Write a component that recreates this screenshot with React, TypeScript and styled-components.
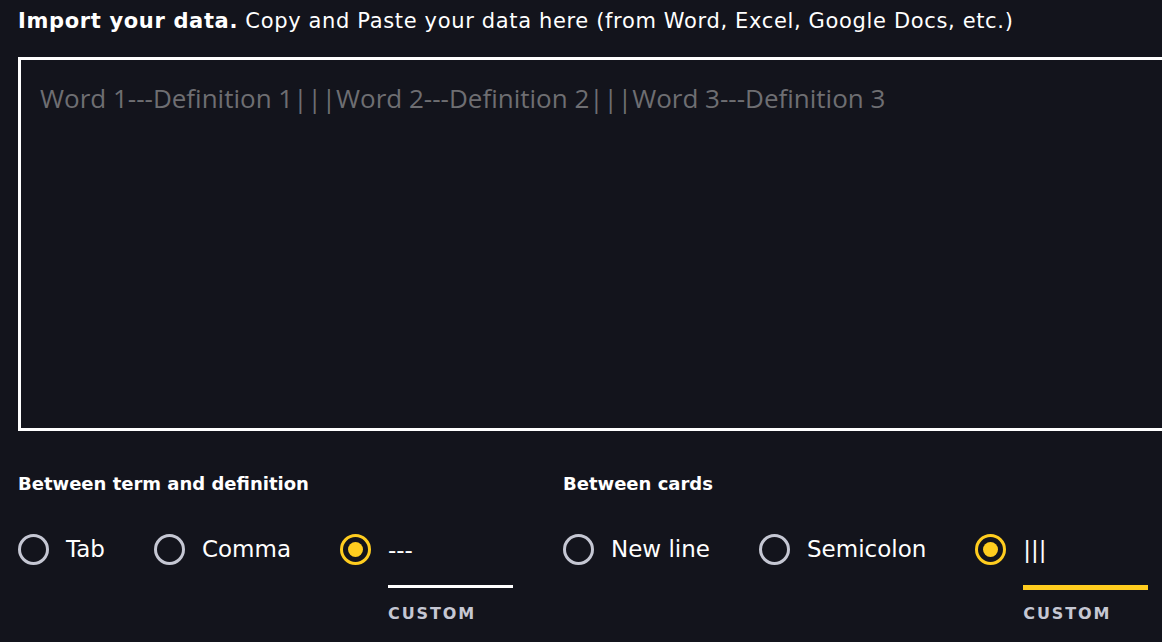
import React from "react";
import styled, { createGlobalStyle } from "styled-components";

const Global = createGlobalStyle`
  html, body { margin: 0; padding: 0; background: #13141c; overflow: hidden; }
  body { font-family: "DejaVu Sans", "Open Sans", sans-serif; color: #ffffff; }
  * { box-sizing: border-box; }
`;

const Page = styled.div`
  width: 1162px;
  height: 642px;
  padding: 8px 0 0 18px;
  overflow: hidden;
`;

const Heading = styled.p`
  margin: 0;
  font-size: 21px;
  letter-spacing: 0.65px;
  line-height: 26px;
  white-space: nowrap;
  strong { font-weight: 700; }
`;

const Area = styled.textarea`
  display: block;
  margin-top: 23px;
  width: 1180px;
  height: 374px;
  border: 3px solid #ffffff;
  border-radius: 0;
  background: transparent;
  color: #ffffff;
  font-family: "Open Sans", sans-serif;
  font-size: 26px;
  padding: 20px 19px;
  resize: none;
  outline: none;
  &::placeholder { color: #6e6e72; opacity: 1; }
`;

const Options = styled.div`
  display: flex;
  margin-top: 41px;
`;

const Column = styled.div`
  width: 545px;
  flex: none;
`;

const GroupLabel = styled.div`
  font-size: 18px;
  font-weight: 700;
  line-height: 24px;
`;

const RadioList = styled.div`
  display: flex;
  align-items: flex-start;
  gap: 49px;
  margin-top: 38px;
`;

const Item = styled.label`
  display: flex;
  align-items: flex-start;
  gap: 17px;
  cursor: pointer;
`;

const Circle = styled.span<{ $on?: boolean }>`
  flex: none;
  width: 31px;
  height: 31px;
  border-radius: 50%;
  border: 3px solid ${(p) => (p.$on ? "#ffcd1f" : "#c5c7d3")};
  display: flex;
  align-items: center;
  justify-content: center;
  &::after {
    content: "";
    display: ${(p) => (p.$on ? "block" : "none")};
    width: 15px;
    height: 15px;
    border-radius: 50%;
    background: #ffcd1f;
  }
`;

const ItemText = styled.span`
  font-size: 23px;
  line-height: 31px;
  white-space: nowrap;
`;

const Custom = styled.div`
  display: flex;
  flex-direction: column;
  width: 125px;
`;

const Field = styled.div`
  height: 58px;
`;

const CustomInput = styled.input<{ $active?: boolean }>`
  display: block;
  width: 125px;
  height: ${(p) => (p.$active ? "56px" : "54px")};
  padding: 0 0 20px 0;
  background: transparent;
  border: none;
  border-bottom: ${(p) => (p.$active ? "5px solid #ffcd1f" : "3px solid #ffffff")};
  color: #ffffff;
  font-family: inherit;
  font-size: 23px;
  line-height: 31px;
  outline: none;
`;

const CustomLabel = styled.span`
  margin-top: 11px;
  font-size: 16px;
  line-height: 22px;
  font-weight: 700;
  letter-spacing: 1.9px;
  color: #c5c7d3;
  text-transform: uppercase;
`;

function Radio({ label, on }: { label: string; on?: boolean }) {
  return (
    <Item>
      <Circle $on={on} />
      <ItemText>{label}</ItemText>
    </Item>
  );
}

function CustomRadio({ value, active }: { value: string; active?: boolean }) {
  return (
    <Item>
      <Circle $on />
      <Custom>
        <Field>
          <CustomInput $active={active} defaultValue={value} />
        </Field>
        <CustomLabel>Custom</CustomLabel>
      </Custom>
    </Item>
  );
}

export default function App() {
  return (
    <>
      <Global />
      <Page>
        <Heading>
          <strong>Import your data.</strong> Copy and Paste your data here (from Word, Excel, Google Docs, etc.)
        </Heading>
        <Area placeholder="Word 1---Definition 1|||Word 2---Definition 2|||Word 3---Definition 3" />
        <Options>
          <Column>
            <GroupLabel>Between term and definition</GroupLabel>
            <RadioList>
              <Radio label="Tab" />
              <Radio label="Comma" />
              <CustomRadio value="---" />
            </RadioList>
          </Column>
          <Column>
            <GroupLabel>Between cards</GroupLabel>
            <RadioList>
              <Radio label="New line" />
              <Radio label="Semicolon" />
              <CustomRadio value="|||" active />
            </RadioList>
          </Column>
        </Options>
      </Page>
    </>
  );
}
